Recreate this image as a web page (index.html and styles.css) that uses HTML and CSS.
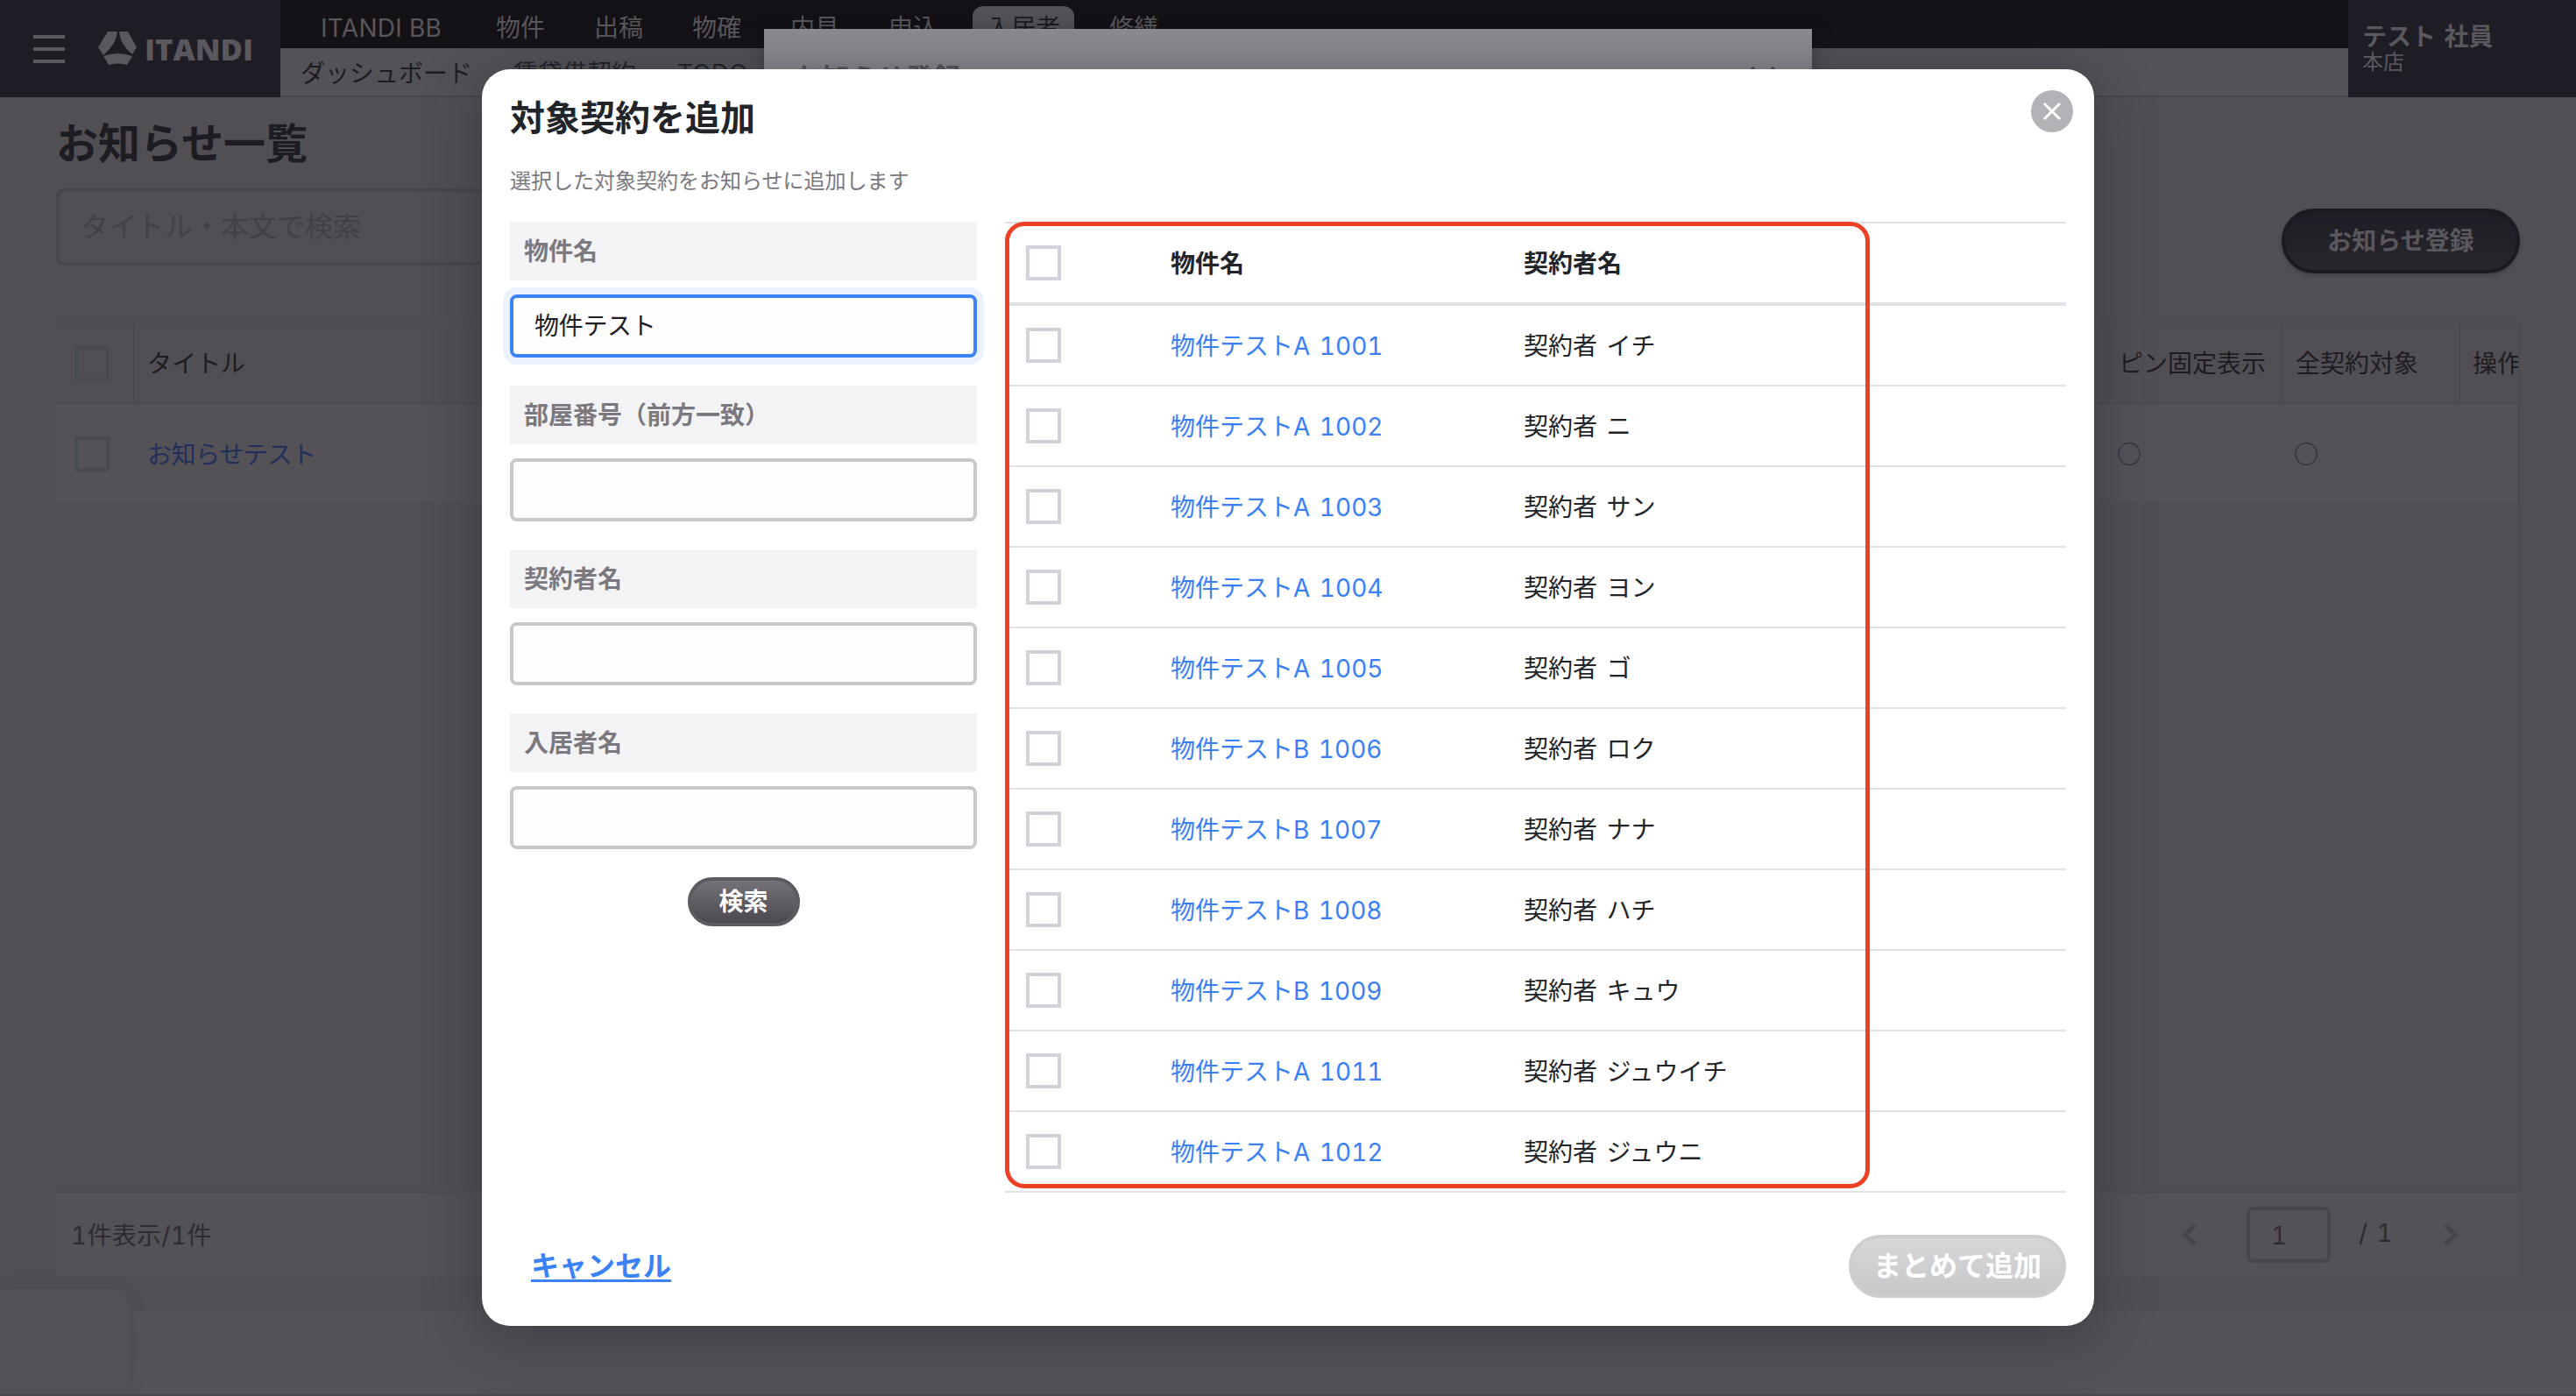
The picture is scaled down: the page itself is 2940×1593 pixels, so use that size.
FILE: index.html
```html
<!DOCTYPE html>
<html lang="ja">
<head>
    <meta charset="UTF-8">
    <title>お知らせ一覧</title>
    <link rel="stylesheet" href="styles.css">
</head>
<body>
    <header class="header">
        <div class="brand">
            <div class="menu-icon"><span></span><span></span><span></span></div>
            <svg class="logo" width="184" height="40" viewBox="0 0 184 40">
                <path d="M11 0H22Q21 14 6 27L0 18Z"/>
                <path d="M24 0H34L44 18L39 26Q25 15 24 0Z"/>
                <path d="M6 28Q22 22 39 28L33 38Q22 35 12 38Z"/>
                <text x="53" y="33" textLength="124" lengthAdjust="spacingAndGlyphs">ITANDI</text>
            </svg>
        </div>
        <div class="navs">
            <nav class="nav">
                <a>ITANDI BB</a>
                <a>物件</a>
                <a>出稿</a>
                <a>物確</a>
                <a>内見</a>
                <a>申込</a>
                <a class="active">入居者</a>
                <a>修繕</a>
            </nav>
            <nav class="subnav">
                <a>ダッシュボード</a>
                <a>賃貸借契約</a>
                <a>TODO</a>
            </nav>
        </div>
        <div class="user">
            <div class="user-name">テスト 社員</div>
            <div class="user-shop">本店</div>
        </div>
    </header>

    <main class="page">
        <h1>お知らせ一覧</h1>
        <div class="tools">
            <div class="search">タイトル・本文で検索</div>
            <button class="btn-register">お知らせ登録</button>
        </div>
        <div class="list">
            <div class="list-row list-head">
                <div class="cell"><span class="check"></span></div>
                <div class="cell">タイトル</div>
                <div class="cell">ピン固定表示</div>
                <div class="cell">全契約対象</div>
                <div class="cell">操作</div>
            </div>
            <div class="list-row list-body">
                <div class="cell"><span class="check"></span></div>
                <div class="cell link">お知らせテスト</div>
                <div class="cell mark">○</div>
                <div class="cell mark">○</div>
                <div class="cell"></div>
            </div>
        </div>
        <div class="pager">
            <div class="count">1件表示/1件</div>
            <svg class="arrow" width="18" height="28" viewBox="0 0 18 28"><path d="M15 3L4 14L15 25"/></svg>
            <div class="page-input">1</div>
            <div class="total">/ 1</div>
            <svg class="arrow" width="18" height="28" viewBox="0 0 18 28"><path d="M3 3L14 14L3 25"/></svg>
        </div>
    </main>
    <div class="corner"></div>

    <!-- first dialog, under the second one -->
    <div class="back-modal">
        <span>お知らせ登録</span>
        <svg width="32" height="32" viewBox="0 0 32 32"><path d="M3 3L29 29M29 3L3 29"/></svg>
    </div>

    <div class="modal">
        <div class="close">
            <svg width="24" height="24" viewBox="0 0 24 24"><path d="M3 3L21 21M21 3L3 21"/></svg>
        </div>
        <h2>対象契約を追加</h2>
        <p class="lead">選択した対象契約をお知らせに追加します</p>
        <div class="modal-body">
            <div class="filter">
                <label>物件名</label>
                <div class="input focus">物件テスト</div>
                <label>部屋番号（前方一致）</label>
                <div class="input"></div>
                <label>契約者名</label>
                <div class="input"></div>
                <label>入居者名</label>
                <div class="input"></div>
                <button class="btn-search">検索</button>
            </div>
            <div class="contracts">
                <div class="row row-head"><span class="check"></span><b>物件名</b><b>契約者名</b></div>
                <div class="row"><span class="check"></span><a>物件テストA 1001</a><span>契約者 イチ</span></div>
                <div class="row"><span class="check"></span><a>物件テストA 1002</a><span>契約者 ニ</span></div>
                <div class="row"><span class="check"></span><a>物件テストA 1003</a><span>契約者 サン</span></div>
                <div class="row"><span class="check"></span><a>物件テストA 1004</a><span>契約者 ヨン</span></div>
                <div class="row"><span class="check"></span><a>物件テストA 1005</a><span>契約者 ゴ</span></div>
                <div class="row"><span class="check"></span><a>物件テストB 1006</a><span>契約者 ロク</span></div>
                <div class="row"><span class="check"></span><a>物件テストB 1007</a><span>契約者 ナナ</span></div>
                <div class="row"><span class="check"></span><a>物件テストB 1008</a><span>契約者 ハチ</span></div>
                <div class="row"><span class="check"></span><a>物件テストB 1009</a><span>契約者 キュウ</span></div>
                <div class="row"><span class="check"></span><a>物件テストA 1011</a><span>契約者 ジュウイチ</span></div>
                <div class="row"><span class="check"></span><a>物件テストA 1012</a><span>契約者 ジュウニ</span></div>
                <div class="marker"></div>
            </div>
        </div>
        <div class="modal-foot">
            <a class="cancel">キャンセル</a>
            <button class="btn-add">まとめて追加</button>
        </div>
    </div>
</body>
</html>
```
FILE: styles.css
```css
* {
    box-sizing: border-box;
}
body {
    margin: 0;
    height: 1593px;
    overflow: hidden;
    position: relative;
    background: #545157;
    color: #1e1c23;
    font-family: Inter, "Noto Sans CJK JP", sans-serif;
    font-variant-numeric: tabular-nums;
    font-size: 28px;
    line-height: 40px;
    border-bottom: 2px solid #4b484e;
}
h1, h2, p {
    margin: 0;
}
button {
    font-family: inherit;
    font-weight: bold;
    padding: 0;
}
.check {
    display: block;
    width: 40px;
    height: 40px;
    border: 4px solid #ced4da;
}

/* header */
.header {
    display: flex;
    height: 111px;
}
.brand {
    width: 320px;
    background: #1e1c25;
    display: flex;
    align-items: center;
    padding-left: 38px;
    gap: 38px;
}
.menu-icon {
    width: 36px;
    display: flex;
    flex-direction: column;
    gap: 10px;
}
.menu-icon span {
    height: 4px;
    background: #5a585e;
}
.logo {
    fill: #5a585e;
    font-size: 34px;
    font-weight: 800;
    font-family: "Open Sans", sans-serif;
}
.navs {
    flex: 1;
}
.nav {
    height: 55px;
    background: #141117;
    color: #59565c;
    display: flex;
    align-items: flex-start;
    padding: 7px 0 0 46px;
    gap: 56px;
}
.nav a {
    height: 48px;
    line-height: 50px;
    white-space: nowrap;
}
.nav a:first-child {
    width: 144px;
    letter-spacing: 0.3px;
}
.nav .active {
    background: #545157;
    color: #1e1c23;
    border-radius: 12px 12px 0 0;
    padding: 0 16px;
    margin: 0 -16px;
}
.subnav {
    height: 56px;
    border-bottom: 2px solid #48454b;
    display: flex;
    align-items: center;
    padding: 3px 0 0 23px;
    gap: 47px;
}
.user {
    width: 260px;
    background: #1e1c25;
    color: #5a585e;
    padding: 26px 16px;
}
.user-name {
    font-weight: bold;
    line-height: 32px;
    word-spacing: 2px;
}
.user-shop {
    font-size: 24px;
    line-height: 25px;
}

/* list page */
.page {
    background: #514e54;
    height: 1385px;
    padding: 23px 64px 0 64px;
}
h1 {
    font-size: 48px;
    line-height: 60px;
}
.tools {
    display: flex;
    justify-content: space-between;
    align-items: flex-start;
    height: 88px;
    margin-top: 21px;
}
.search {
    width: 700px;
    height: 88px;
    line-height: 80px;
    border: 4px solid #48454b;
    border-radius: 8px;
    padding-left: 24px;
    font-size: 32px;
    color: #434046;
}
.btn-register {
    width: 272px;
    height: 74px;
    margin-top: 23px;
    border: 4px solid #1c1a20;
    border-radius: 37px;
    background: linear-gradient(#1e1c25, #29272c);
    color: #5a585e;
    font-size: 28px;
    line-height: 60px;
    box-shadow: 0 2px 4px rgba(0, 0, 0, 0.2);
}
.list {
    margin-top: 64px;
    height: 994px;
    border: 2px solid #4b4a51;
    border-left: none;
    overflow: hidden;
}
.list-row {
    display: grid;
    grid-template-columns: 90px 2250px 202px 202px 66px;
}
.list-head {
    height: 92px;
    border-bottom: 2px solid #4b4a51;
}
.list-body {
    height: 112px;
    background: #545157;
}
.list .cell {
    display: flex;
    align-items: center;
    padding-left: 14px;
    white-space: nowrap;
}
.list-head .cell {
    border-right: 2px solid #4b4a51;
    padding-top: 2px;
}
.list-head .cell:last-child {
    border-right: none;
}
.list .cell:first-child {
    padding-left: 21px;
}
.list .check {
    border-color: #474a4e;
}
.list-body .check {
    margin-top: 2px;
}
.list .link {
    color: #20305c;
    padding-top: 4px;
    letter-spacing: -0.4px;
}
.list .mark {
    font-family: "Noto Sans CJK JP", sans-serif;
    color: #2e2b33;
    padding-left: 12px;
}
.pager {
    height: 95px;
    background: #545157;
    color: #2e2b33;
    display: flex;
    align-items: center;
    padding: 0 70px 0 17px;
}
.count {
    flex: 1;
    padding-top: 2px;
    letter-spacing: 0.3px;
}
.arrow {
    fill: none;
    stroke: #46454b;
    stroke-width: 5;
}
.page-input {
    width: 96px;
    height: 64px;
    line-height: 58px;
    margin: 0 32px 0 56px;
    border: 4px solid #48454b;
    border-radius: 8px;
    padding-left: 24px;
}
.total {
    width: 96px;
    margin-bottom: 4px;
    word-spacing: 3px;
}
.corner {
    position: absolute;
    left: 0;
    top: 1471px;
    width: 147px;
    height: 120px;
    border-top-right-radius: 20px;
    background: #535056;
    box-shadow: 0 0 32px rgba(0, 0, 0, 0.04);
}

/* dialogs */
.back-modal {
    position: absolute;
    left: 872px;
    top: 33px;
    width: 1196px;
    height: 800px;
    background: #8d8b91;
    color: #54525a;
    box-shadow: 0 8px 24px rgba(0, 0, 0, 0.35);
    display: flex;
    align-items: flex-start;
    justify-content: space-between;
    padding: 37px 40px 0 34px;
    font-size: 32px;
    font-weight: bold;
}
.back-modal svg {
    margin-top: 4px;
    fill: none;
    stroke: #54525a;
    stroke-width: 4;
}
.modal {
    position: absolute;
    left: 550px;
    top: 79px;
    width: 1840px;
    height: 1434px;
    padding: 30px 32px 0;
    border-radius: 32px;
    background: #fff;
    color: #212529;
    box-shadow: 0 10px 60px rgba(50, 54, 60, 0.7);
}
.close {
    position: absolute;
    right: 24px;
    top: 24px;
    width: 48px;
    height: 48px;
    border-radius: 50%;
    background: #b4b2b7;
    display: flex;
    align-items: center;
    justify-content: center;
}
.close svg {
    fill: none;
    stroke: #fff;
    stroke-width: 3;
}
h2 {
    font-size: 40px;
    line-height: 52px;
}
.lead {
    margin-top: 26px;
    font-size: 24px;
    line-height: 40px;
    color: #7b797f;
}
.modal-body {
    display: flex;
    gap: 32px;
    margin-top: 26px;
}
.filter {
    width: 533px;
    display: flex;
    flex-direction: column;
}
.filter label {
    height: 67px;
    line-height: 69px;
    padding-left: 16px;
    background: #f3f3f5;
    color: #7b797f;
    font-weight: bold;
}
.filter .input {
    height: 72px;
    line-height: 65px;
    margin: 16px 0 32px;
    padding-left: 24px;
    border: 4px solid #c8c8ca;
    border-radius: 8px;
    background: #fdfdfe;
}
.filter .focus {
    border-color: #3b82f6;
    box-shadow: 0 0 0 8px #ebf2fe;
    color: #1e1c26;
    letter-spacing: -0.3px;
}
.btn-search {
    align-self: center;
    width: 128px;
    height: 56px;
    border: 4px solid #5d5a62;
    border-radius: 28px;
    background: linear-gradient(#75737a, #4b484f);
    color: #fff;
    font-size: 28px;
    line-height: 46px;
}
.contracts {
    position: relative;
    flex: 1;
    height: 1108px;
    border-top: 2px solid #dee2e6;
}
.row {
    display: grid;
    grid-template-columns: 165px 403px 1fr;
    align-items: center;
    height: 92px;
    padding-left: 24px;
    border-bottom: 2px solid #dee2e6;
    word-spacing: 3px;
}
.row-head {
    height: 94px;
    border-bottom-width: 4px;
}
.row a, .row b, .row .check + * + span {
    padding-top: 2px;
}
.row a {
    color: #3b7ff5;
}
.marker {
    position: absolute;
    left: 0;
    top: -2px;
    width: 987px;
    height: 1103px;
    border: 5px solid #ec4125;
    border-radius: 22px;
}
.modal-foot {
    display: flex;
    align-items: center;
    justify-content: space-between;
    margin-top: 48px;
    padding-left: 24px;
}
.cancel {
    color: #3b82f6;
    font-size: 32px;
    font-weight: bold;
    text-decoration: underline;
    text-decoration-thickness: 3px;
    text-underline-offset: 4px;
}
.btn-add {
    width: 248px;
    height: 72px;
    border: 4px solid #cdcdcf;
    border-radius: 36px;
    background: linear-gradient(#d7d7d9, #c8c8ca);
    color: #fff;
    font-size: 32px;
    line-height: 60px;
}
```
